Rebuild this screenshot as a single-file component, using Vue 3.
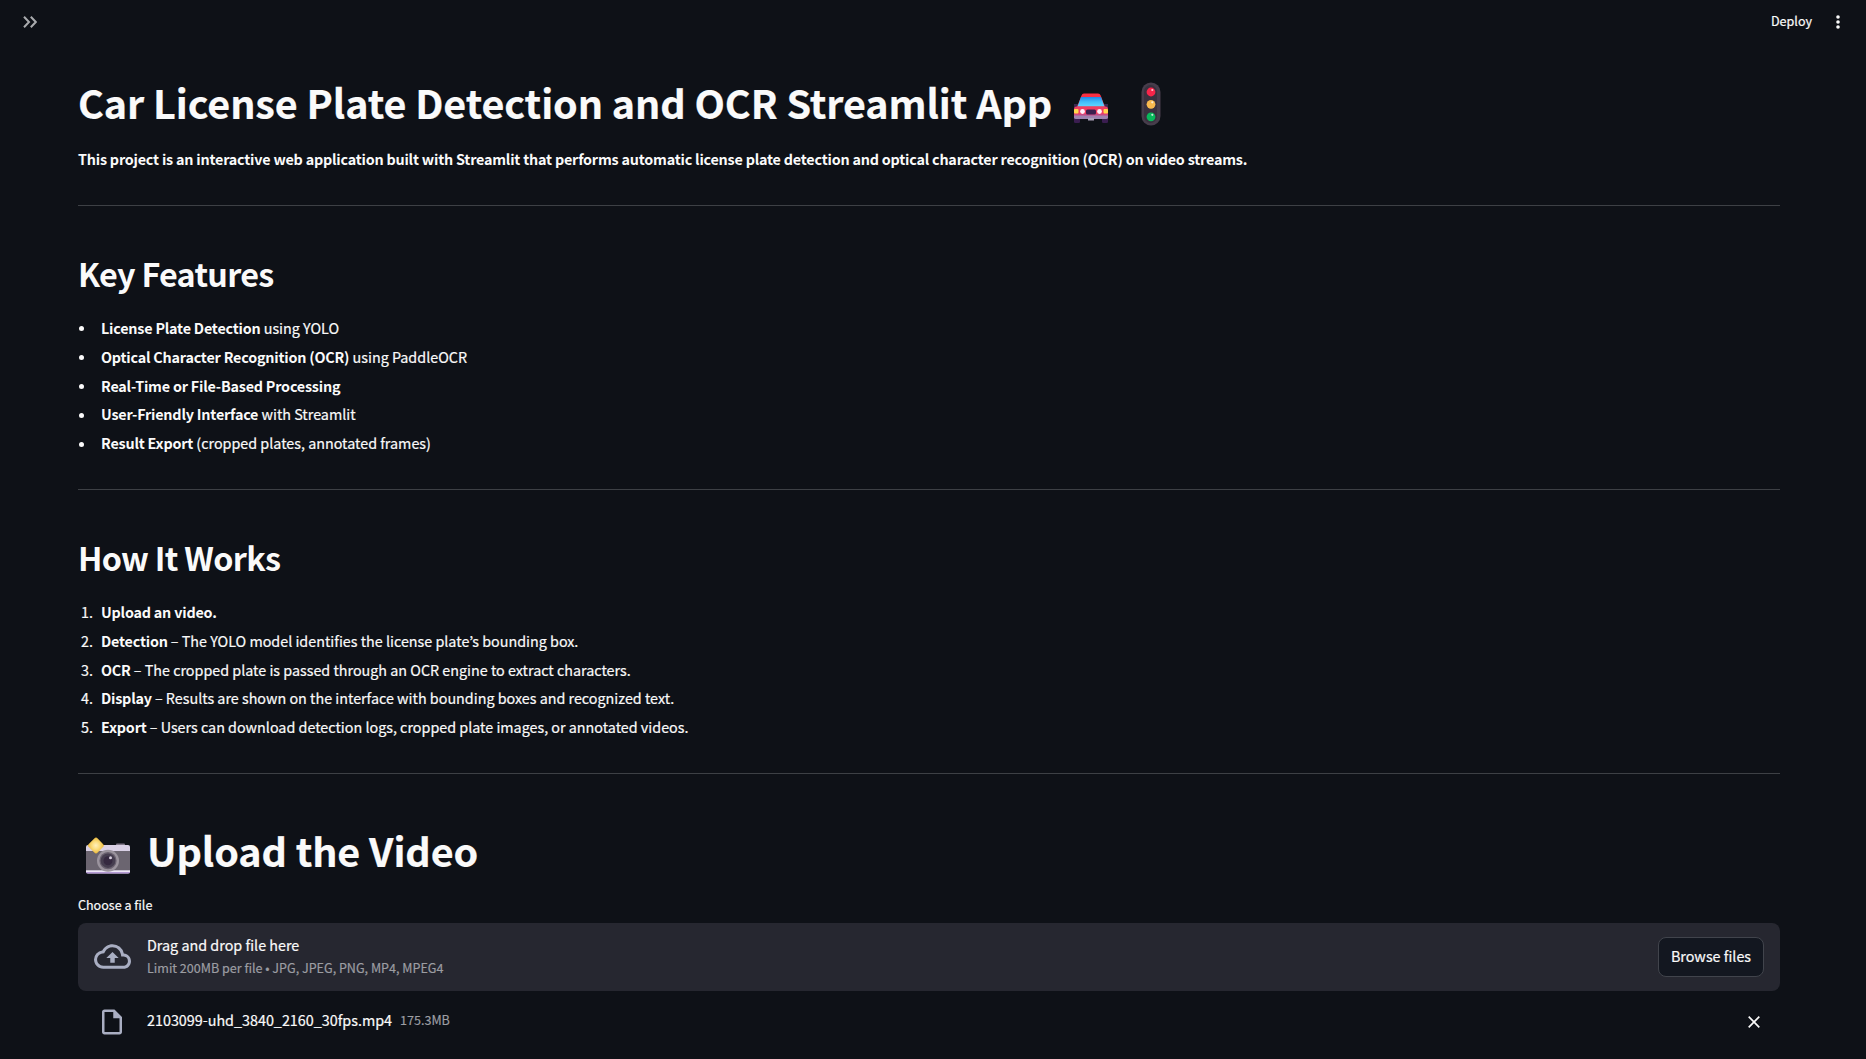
<script setup>
const features = [
  { term: 'License Plate Detection', rest: ' using YOLO' },
  { term: 'Optical Character Recognition (OCR)', rest: ' using PaddleOCR' },
  { term: 'Real-Time or File-Based Processing', rest: '' },
  { term: 'User-Friendly Interface', rest: ' with Streamlit' },
  { term: 'Result Export', rest: ' (cropped plates, annotated frames)' }
]
const steps = [
  { term: 'Upload an video.', rest: '' },
  { term: 'Detection', rest: ' – The YOLO model identifies the license plate’s bounding box.' },
  { term: 'OCR', rest: ' – The cropped plate is passed through an OCR engine to extract characters.' },
  { term: 'Display', rest: ' – Results are shown on the interface with bounding boxes and recognized text.' },
  { term: 'Export', rest: ' – Users can download detection logs, cropped plate images, or annotated videos.' }
]
</script>

<template>
  <div class="app">
    <header class="bar">
      <svg class="expand" viewBox="0 0 14 12" width="14" height="12"><path d="M1 .8 6 6l-5 5.2M7.8.8l5 5.2-5 5.2" fill="none" stroke="#a9abae" stroke-width="2" /></svg>
      <div class="tools">
        <span class="deploy">Deploy</span>
        <svg width="4" height="14" viewBox="0 0 4 14" fill="#fafafa"><circle cx="2" cy="2" r="1.8" /><circle cx="2" cy="7" r="1.8" /><circle cx="2" cy="12" r="1.8" /></svg>
      </div>
    </header>

    <main>
      <h1>
        <span class="title">Car License Plate Detection and OCR Streamlit App</span>
        <svg class="car" width="36" height="30" viewBox="0 0 36 30">
          <path d="M1 11h4v5H1zM31 11h4v5h-4z" fill="#3b2850" />
          <rect x="1" y="22" width="6" height="8" rx="1.2" fill="#3a1d50" /><rect x="29" y="22" width="6" height="8" rx="1.2" fill="#3a1d50" />
          <path d="M8.500 2.500Q9 .5 11 .5h14q2 0 2.700 2L32 14H4z" fill="#f92f43" />
          <path d="M8 4h20l3.500 9.500h-27z" fill="url(#glass)" />
          <path d="M3.500 13.500h29q2.500 0 2.500 3V23H1v-6.500q0-3 2.500-3z" fill="#ef3d62" />
          <path d="M1 21.500h34v3q0 1.500-2 1.500H3q-2 0-2-1.500z" fill="#9f83b0" />
          <path d="M1 21h34v1.500H1z" fill="#c94884" />
          <path d="M15 25h6v2.500h-6z" fill="#aaa0b8" />
          <rect x="13" y="16.500" width="10" height="5" rx="1.500" fill="#3a1f4e" />
          <rect x="1" y="16" width="4.500" height="4.500" rx="1" fill="#ffd84e" /><rect x="30.500" y="16" width="4.500" height="4.500" rx="1" fill="#ffd84e" />
          <circle cx="9.500" cy="18.500" r="2.400" fill="#fff0fa" /><circle cx="26.500" cy="18.500" r="2.400" fill="#fff0fa" />
          <defs><linearGradient id="glass" x1="0" y1="0" x2="0" y2="1"><stop offset="0" stop-color="#1f86e8" /><stop offset=".5" stop-color="#42bdfa" /><stop offset="1" stop-color="#5fd6ff" /></linearGradient></defs>
        </svg>
        <svg class="light" width="20" height="44" viewBox="0 0 20 44">
          <rect x=".5" y=".5" width="19" height="43" rx="9.500" fill="#463d4b" />
          <rect x="3" y="3" width="13" height="38" rx="6.500" fill="#3a313f" />
          <circle cx="10" cy="10" r="4.400" fill="#f8254a" /><circle cx="10" cy="22.300" r="4.400" fill="#f9b94e" /><circle cx="10" cy="34.800" r="4.400" fill="#09b85b" />
          <g fill="#fff" opacity=".75"><circle cx="11.300" cy="8" r="1.100" /><circle cx="11.300" cy="20.300" r="1.100" /><circle cx="11.300" cy="32.800" r="1.100" /></g>
        </svg>
      </h1>
      <p class="lead">This project is an interactive web application built with Streamlit that performs automatic license plate detection and optical character recognition (OCR) on video streams.</p>
      <hr />

      <section>
        <h2>Key Features</h2>
        <ul>
          <li v-for="f in features" :key="f.term"><span class="mark"><i class="dot"></i></span><span class="text"><strong>{{ f.term }}</strong>{{ f.rest }}</span></li>
        </ul>
      </section>
      <hr />

      <section>
        <h2>How It Works</h2>
        <ol>
          <li v-for="(s, i) in steps" :key="s.term"><span class="mark">{{ i + 1 }}.</span><span class="text"><strong>{{ s.term }}</strong>{{ s.rest }}</span></li>
        </ol>
      </section>
      <hr />

      <h1 class="upload">
        <svg class="camera" width="46" height="38" viewBox="0 0 46 38">
          <rect x="31" y="6.500" width="9" height="3" rx="1" fill="#817989" />
          <rect x="1" y="8" width="44" height="28.500" rx="2" fill="#d9d0e5" />
          <rect x="1" y="14" width="44" height="19.500" fill="#6b6570" />
          <rect x="1" y="33.500" width="44" height="1.500" fill="#eee7f7" />
          <path d="M1 35h44q0 1.500-2 1.500H3q-2 0-2-1.500z" fill="#b49ad4" />
          <circle cx="23" cy="23.700" r="11" fill="#9b949e" />
          <circle cx="23" cy="23.700" r="8.600" fill="#69616f" />
          <circle cx="23" cy="23.700" r="7.300" fill="#463e50" />
          <circle cx="23" cy="23.700" r="4.500" fill="#352940" />
          <circle cx="25.500" cy="20.700" r="1.500" fill="#d8d0df" />
          <path d="M9.300 1.500q1.700-2.200 3.400 0l5.500 5.700q1.200 1.300 0 2.600L12.700 15.500q-1.700 2-3.400 0L3.500 9.800q-1.200-1.300 0-2.600z" fill="url(#flash)" />
          <defs><radialGradient id="flash"><stop offset="0" stop-color="#fff0bd" /><stop offset=".5" stop-color="#fbdc7b" /><stop offset="1" stop-color="#e9b83b" /></radialGradient></defs>
        </svg>
        <span>Upload the Video</span>
      </h1>

      <label class="label">Choose a file</label>
      <div class="dropzone">
        <svg class="cloud" width="37" height="37" viewBox="0 0 24 24" fill="#a9aec2"><path d="M19.350 10.040A7.490 7.490 0 0 0 12 4C9.110 4 6.600 5.640 5.350 8.040A5.994 5.994 0 0 0 0 14c0 3.310 2.690 6 6 6h13c2.760 0 5-2.240 5-5 0-2.640-2.050-4.780-4.650-4.960zM19 18H6c-2.210 0-4-1.790-4-4 0-2.050 1.530-3.760 3.560-3.970l1.070-.11.5-.95A5.469 5.469 0 0 1 12 6c2.620 0 4.880 1.860 5.390 4.430l.3 1.500 1.530.11A2.980 2.980 0 0 1 22 15c0 1.650-1.350 3-3 3zM8 13h2.550v3h2.900v-3H16l-4-4z" /></svg>
        <div class="hint">
          <span class="drag">Drag and drop file here</span>
          <span class="limit">Limit 200MB per file • JPG, JPEG, PNG, MP4, MPEG4</span>
        </div>
        <button type="button">Browse files</button>
      </div>
      <div class="file">
        <svg width="30" height="30" viewBox="0 0 24 24" fill="#a9aec2"><path d="M14 2H6c-1.100 0-1.990.9-1.990 2L4 20c0 1.100.89 2 1.990 2H18c1.100 0 2-.9 2-2V8l-6-6zM6 20V4h7v5h5v11H6z" /></svg>
        <span class="name">2103099-uhd_3840_2160_30fps.mp4</span>
        <span class="size">175.3MB</span>
        <svg class="close" width="12" height="12" viewBox="0 0 12 12"><path d="m.7.7 10.600 10.600M11.300.7.7 11.300" stroke="#fafafa" stroke-width="1.700" /></svg>
      </div>
    </main>
  </div>
</template>

<style>
body { margin: 0; background: #0e1117; }
</style>

<style scoped>
.app {
  height: 1059px;
  overflow: hidden;
  box-sizing: border-box;
  background: #0e1117;
  color: #fafafa;
  font-family: "Noto Sans CJK KR", "Noto Sans CJK SC", sans-serif;
  font-size: 14.350px;
  white-space: nowrap;
  -webkit-text-stroke: .2px;
}
h1, h2, p, ul, ol { margin: 0; padding: 0; }
svg { display: block; flex: none; }
.bar { height: 44px; padding: 0 26px 0 23px; display: flex; align-items: center; justify-content: space-between; }
.tools { display: flex; align-items: center; gap: 24px; }
.deploy { margin-top: -2px; font-size: 12.560px; line-height: 20px; }
main { width: 1702px; margin-left: 78px; padding-top: 31px; }
h1 { display: flex; height: 53px; line-height: 53px; font-size: 39.500px; font-weight: 700; letter-spacing: -.1px; }
.title { letter-spacing: -.09px; }
.car { margin: 18px 0 0 21px; }
.light { margin: 6.500px 0 0 32px; }
.lead { margin-top: 18px; height: 26px; line-height: 26px; font-weight: 700; letter-spacing: -.203px; -webkit-text-stroke: 0; }
strong { letter-spacing: -.2px; -webkit-text-stroke: 0; }
hr { height: 1px; border: 0; margin: 33px 0 45px; background: #3d4045; }
h2 { height: 44px; line-height: 44px; font-size: 32.300px; font-weight: 600; letter-spacing: -.69px; -webkit-text-stroke: 0; }
ul, ol { margin-top: 19px; height: 142px; list-style: none; }
li { display: flex; height: 28.800px; line-height: 28.800px; }
.mark { width: 23px; box-sizing: border-box; display: flex; align-items: center; }
ol .mark { padding-left: 3px; }
.dot { width: 5px; height: 5px; border-radius: 50%; background: #fafafa; margin: 1px 0 0 1px; }
.text { white-space: pre; letter-spacing: -.01px; }
hr + .upload { margin-top: 49px; }
.camera { margin: 14px 16px 0 7px; }
.label { display: block; margin-top: 19px; height: 20px; line-height: 20px; font-size: 12.560px; }
.dropzone { margin-top: 8px; height: 68px; padding: 0 16px; box-sizing: border-box; border-radius: 8px; background: #262730; display: flex; align-items: center; }
.cloud { margin-top: -1px; }
.hint { display: flex; flex-direction: column; margin: -4px 0 0 16px; }
.drag { line-height: 24px; }
.limit { line-height: 21px; font-size: 12.560px; color: #9c9da2; }
button { margin-left: auto; width: 106px; height: 40px; padding: 0 0 3px; border: 1px solid #41444c; border-radius: 8px; background: #131720; color: #fafafa; font: inherit; }
.file { margin-top: 13px; height: 36px; padding: 0 20px 0 19px; display: flex; align-items: center; }
.name { margin: -4px 8px 0 20px; line-height: 24px; }
.size { margin-top: -4px; line-height: 24px; font-size: 12.560px; color: #9c9da2; }
.close { margin-left: auto; }
</style>
